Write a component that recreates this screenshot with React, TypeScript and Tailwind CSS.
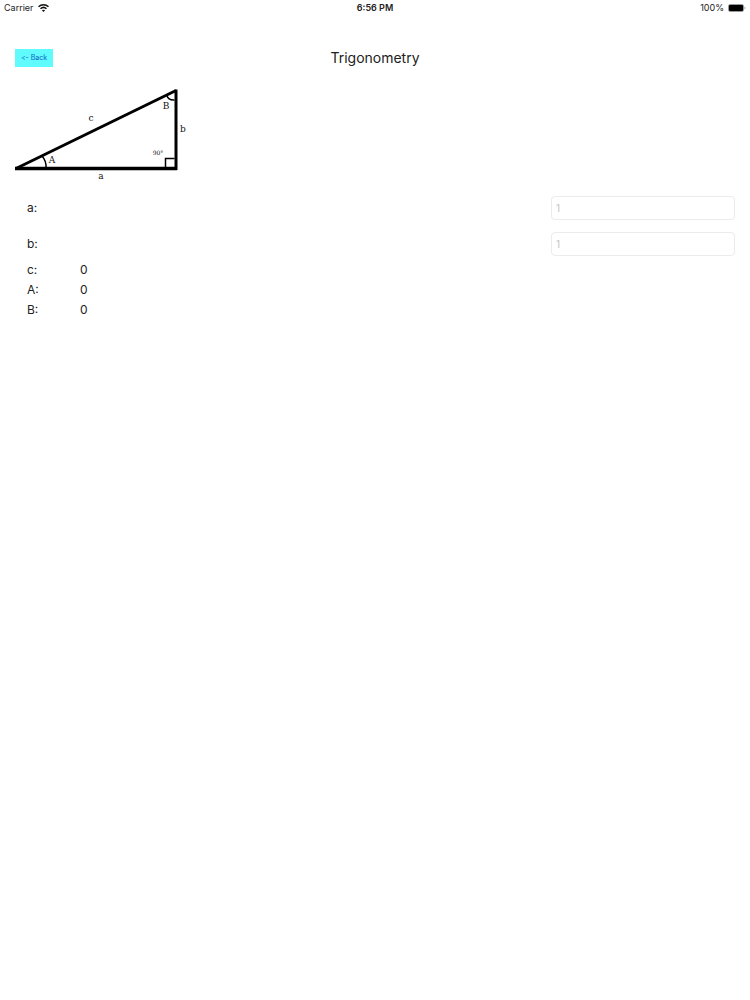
import { useState } from "react";

function StatusBar() {
    return (
        <div className="grid grid-cols-3 items-center h-4 px-1 text-[9px] leading-4 text-[#222]">
            <div className="flex items-center gap-1">
                <span>Carrier</span>
                <svg width="11" height="8" viewBox="0 0 22 16" fill="none" stroke="#111" strokeWidth="3">
                    <path d="M1 5.500C6.500.3 15.500.3 21 5.500" />
                    <path d="M5 9.500c3.500-3.200 8.500-3.200 12 0" />
                    <path d="M11 16l-3.200-3.300c1.800-1.600 4.600-1.600 6.400 0z" fill="#111" stroke="none" />
                </svg>
            </div>
            <span className="text-center font-semibold">6:56 PM</span>
            <div className="flex items-center justify-end gap-1">
                <span>100%</span>
                <svg width="18" height="8" viewBox="0 0 18 8">
                    <rect x="0.500" y="0.500" width="15" height="7" rx="1.500" fill="#fff" stroke="#999" />
                    <rect x="1" y="1" width="14" height="6" rx="1" fill="#000" />
                    <path d="M16.500 2.500c1.200.4 1.200 2.600 0 3z" fill="#999" />
                </svg>
            </div>
        </div>
    );
}

function Triangle() {
    return (
        <svg
            className="block"
            width="180"
            height="100"
            viewBox="0 0 180 100"
            fill="none"
            stroke="#000"
            role="img"
            aria-label="Right triangle with sides a, b, c and angles A, B"
        >
            <path d="M0 84.500H162" strokeWidth="3.500" />
            <path d="M161 5.500V86" strokeWidth="3" />
            <path d="M1 84.500L161 6.500" strokeWidth="3" />
            <path d="M27 72q4.500 5 4 12" strokeWidth="1.500" />
            <path d="M151.500 11q2 5.500 8 5" strokeWidth="1.500" />
            <path d="M150.500 83V74.500H159.500" strokeWidth="1.500" />
            <g fill="#111" stroke="none" fontFamily="'DejaVu Serif', serif" textAnchor="middle">
                <text x="76" y="37" fontSize="9">c</text>
                <text x="37" y="79" fontSize="9">A</text>
                <text x="151" y="25" fontSize="9">B</text>
                <text x="168" y="48" fontSize="9">b</text>
                <text x="86" y="95" fontSize="9">a</text>
                <text x="143" y="71" fontSize="6">90°</text>
            </g>
        </svg>
    );
}

export default function App() {
    const [a, setA] = useState("");
    const [b, setB] = useState("");

    const sideA = parseFloat(a);
    const sideB = parseFloat(b);
    const ready = sideA > 0 && sideB > 0;
    const angle = ready ? (Math.atan(sideB / sideA) * 180) / Math.PI : 0;

    const inputs = [
        { id: "a", value: a, onChange: setA },
        { id: "b", value: b, onChange: setB },
    ];

    const results = [
        { label: "c", value: ready ? Math.hypot(sideA, sideB) : 0 },
        { label: "A", value: angle },
        { label: "B", value: ready ? 90 - angle : 0 },
    ];

    return (
        <div className="min-h-screen bg-white font-[Inter,sans-serif] text-[#222]">
            <StatusBar />

            <main className="px-[15px] pt-8">
                <header className="grid grid-cols-3 items-center">
                    <button
                        type="button"
                        className="justify-self-start w-[38px] h-[18px] bg-[#5ffbfd] text-[#1262c4] text-[7px] leading-4 [font-feature-settings:'calt'_0]"
                    >
                        &lt;- Back
                    </button>
                    <h1 className="text-center text-sm">Trigonometry</h1>
                </header>

                <div className="pt-4">
                    <Triangle />
                </div>

                <form className="flex flex-col gap-3 pt-3 pl-3 text-xs">
                    {inputs.map((input) => (
                        <div key={input.id} className="flex items-center justify-between">
                            <label htmlFor={input.id}>{input.id}:</label>
                            <input
                                id={input.id}
                                type="text"
                                inputMode="decimal"
                                placeholder="1"
                                value={input.value}
                                onChange={(e) => input.onChange(e.target.value)}
                                className="w-[26%] h-6 px-1 rounded border border-[#ebebeb] bg-white text-[10px] placeholder:text-[#c4c4c4] outline-none"
                            />
                        </div>
                    ))}
                </form>

                <dl className="pt-1 pl-3 text-xs leading-5">
                    {results.map((result) => (
                        <div key={result.label} className="flex">
                            <dt className="w-[53px]">{result.label}:</dt>
                            <dd>{Number(result.value.toFixed(4))}</dd>
                        </div>
                    ))}
                </dl>
            </main>
        </div>
    );
}
